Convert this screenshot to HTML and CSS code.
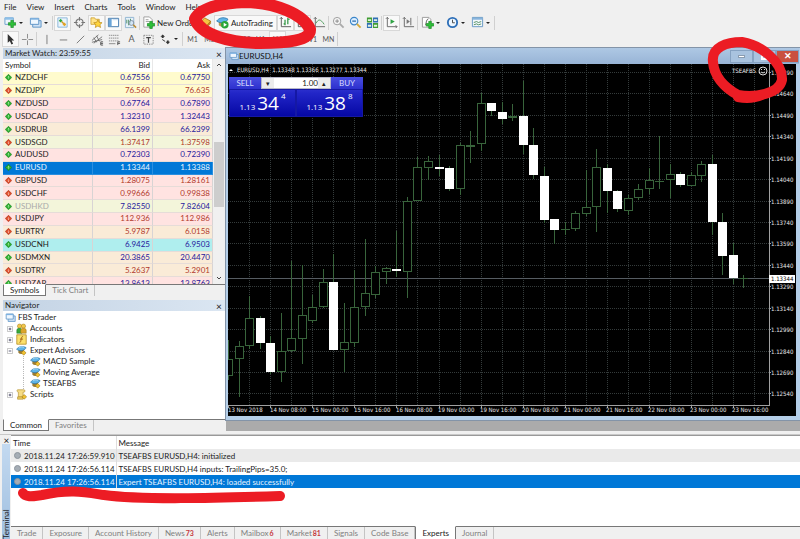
FILE: index.html
```html
<!DOCTYPE html>
<html lang="en">
<head>
<meta charset="utf-8">
<title>FBS Trader - EURUSD,H4</title>
<link rel="stylesheet" href="styles.css">
</head>
<body>
<svg class="defs" aria-hidden="true">
  <symbol id="plus" viewBox="0 0 8 8"><path d="M3 .5h2.4v2.300h2.300v2.400H5.400v2.300H3V5.200H.6V2.800H3z" fill="#2fc03a" stroke="#15801f" stroke-width=".6"/></symbol>
  <symbol id="new" viewBox="0 0 14 14"><path d="M1 2h9v7H1z" fill="#eef6fd" stroke="#6aa0cc"/><path d="M1 1.500h9V4H1z" fill="#8dbfe8"/><use href="#plus" x="4" y="4" width="9" height="9"/></symbol>
  <symbol id="windows" viewBox="0 0 14 14"><path d="M4 5h9v7H4z" fill="#cfe2f5" stroke="#5b92c5"/><path d="M1.500 2.500h9v6.500h-9z" fill="#eff7ff" stroke="#5b92c5"/><path d="M1.500 2.500h9v1.500h-9z" fill="#7db2e2"/></symbol>
  <symbol id="watch" viewBox="0 0 14 14"><path d="M2 2h10v10H2z" fill="#e9f4fc" stroke="#88b5d8"/><path d="M3 5l2-2 2 2-2 2z" fill="#2da83c"/><path d="M6 6l4 4" stroke="#d29a20" stroke-width="1.500"/><path d="M7 9l2-2 2 2-2 2z" fill="#e0a326"/></symbol>
  <symbol id="target" viewBox="0 0 14 14"><circle cx="7" cy="7" r="3.800" fill="none" stroke="#777" stroke-width="1.200"/><path d="M7 1v4M7 9v4M1 7h4M9 7h4" stroke="#777" stroke-width="1.200"/></symbol>
  <symbol id="folder" viewBox="0 0 14 14"><path d="M1 2h4l1 1.500h4V9H1z" fill="#ffe48a" stroke="#c99a25" stroke-width=".8"/><path d="M8.500 4l1.400 2.900 3.100.3-2.300 2.100.7 3.100-2.900-1.600-2.800 1.600.6-3.100L4 7.200l3.100-.3z" fill="#ffd53d" stroke="#b98613" stroke-width=".7"/></symbol>
  <symbol id="terminal" viewBox="0 0 14 14"><path d="M1.500 2.500h11v9h-11z" fill="#fff" stroke="#3f77ac"/><path d="M2 3h3v8H2z" fill="#6aa5d8"/><path d="M6 4h6" stroke="#c2daf0"/></symbol>
  <symbol id="tester" viewBox="0 0 14 14"><path d="M1.500 1.500h9v11h-9z" fill="#e6f1fa" stroke="#8fb3d1"/><path d="M3 8V4m2 6V4m2 4V3" stroke="#4c8f61"/><circle cx="8" cy="7.500" r="2.600" fill="#cfe4f5" fill-opacity=".8" stroke="#7d8da0"/><path d="M10 9.500l3 3" stroke="#b88a32" stroke-width="1.600"/></symbol>
  <symbol id="order" viewBox="0 0 14 14"><path d="M2 1h6l3 3v8H2z" fill="#fff" stroke="#888" stroke-width=".8"/><path d="M4 4h3M4 6h4" stroke="#999"/><use href="#plus" x="5" y="5" width="9" height="9"/></symbol>
  <symbol id="book" viewBox="0 0 14 14"><path d="M1.500 7L6 2l6.500 3.500L8 11z" fill="#f5c542" stroke="#a8700f" stroke-width=".8"/><path d="M1.500 7v2L8 13v-2zM8 11v2l4.500-5V5.500z" fill="#c98a1b" stroke="#a8700f" stroke-width=".6"/></symbol>
  <symbol id="expert" viewBox="0 0 14 14"><path d="M3 6v4c2 2 5 2 7 0V6z" fill="#9a7b35"/><path d="M.7 5.500C3 2 8 .5 12.800 3.300 12 6.500 6 9 .7 5.500z" fill="#5fb4e8" stroke="#1f6fa8" stroke-width=".8"/><path d="M4 3.500c2-1.500 5-1.500 6-.4" stroke="#c5e8fb" fill="none"/><path d="M9.800 7l3 3-3 3-3-3z" fill="#f2c230" stroke="#94700f" stroke-width=".7"/></symbol>
  <symbol id="auto" viewBox="0 0 14 14"><path d="M3 6v4c2 2 5 2 7 0V6z" fill="#b59a50"/><path d="M.7 5.500C3 2 8 .5 12.800 3.300 12 6.500 6 9 .7 5.500z" fill="#5fb4e8" stroke="#1f6fa8" stroke-width=".8"/><circle cx="9.500" cy="9.500" r="4" fill="#29a637"/><path d="M8.300 7.300l3.500 2.200-3.500 2.200z" fill="#fff"/></symbol>
  <symbol id="bars" viewBox="0 0 14 14"><path d="M2.500 1.500v10H13M1 3l1.500-1.500L4 3M2.500 11.500" fill="none" stroke="#555"/><path d="M6.500 4v6M5 8.500h1.500M9.500 2v7M9.500 3.500h2" stroke="#2d9440" stroke-width="1.300"/></symbol>
  <symbol id="candle" viewBox="0 0 14 14"><path d="M2.500 1.500v10H13" fill="none" stroke="#555"/><path d="M6 3h2v6H6zM10 2h2v5h-2z" fill="#2d9440"/></symbol>
  <symbol id="line" viewBox="0 0 14 14"><path d="M2.500 1.500v10H13M1 3l1.500-1.500L4 3" fill="none" stroke="#666"/><path d="M3 8c3-5 5-5 9 1" fill="none" stroke="#4a9a58"/></symbol>
  <symbol id="zoomin" viewBox="0 0 14 14"><circle cx="5.500" cy="5.500" r="4" fill="#f5f5f5" stroke="#999"/><path d="M3.500 5.500h4M5.500 3.500v4" stroke="#888"/><path d="M8.500 8.500l4 4" stroke="#aaa" stroke-width="2"/></symbol>
  <symbol id="zoomout" viewBox="0 0 14 14"><circle cx="5.500" cy="5.500" r="4" fill="#dceeff" stroke="#3a85c9" stroke-width="1.200"/><path d="M3.500 5.500h4" stroke="#2466a5" stroke-width="1.300"/><path d="M8.500 8.500l4 4" stroke="#d4aa3c" stroke-width="2"/></symbol>
  <symbol id="tiles" viewBox="0 0 14 14"><path d="M1 1.500h5.500V7H1zM7.500 7.500H13V13H7.500z" fill="#3f9c33"/><path d="M7.500 1.500H13V7H7.500zM1 7.500h5.500V13H1z" fill="#2e6fb5"/><path d="M2 3.500h3.500v2H2zM8.500 3.500H12v2H8.500zM2 9.500h3.500v2H2zM8.500 9.500H12v2H8.500z" fill="#e2f2e0"/></symbol>
  <symbol id="scroll" viewBox="0 0 14 14"><path d="M2.500 1.500v10H13M1 3l1.500-1.500L4 3M11.500 10L13 11.500 11.500 13" fill="none" stroke="#666"/><path d="M6 3.500L10.500 6 6 8.500z" fill="#2fa344"/></symbol>
  <symbol id="shift" viewBox="0 0 14 14"><path d="M2.500 1.500v10H13M1 3l1.500-1.500L4 3M9.500 2v8" fill="none" stroke="#666"/><path d="M5 3.500L8.500 6 5 8.500z" fill="#777"/></symbol>
  <symbol id="indic" viewBox="0 0 14 14"><path d="M1.500 1.500h7l2 2V12h-9z" fill="#fff" stroke="#999"/><path d="M5 10c1-5 1-6 3-7" stroke="#444" fill="none"/><use href="#plus" x="5" y="5" width="9" height="9"/></symbol>
  <symbol id="clock" viewBox="0 0 14 14"><circle cx="7" cy="7" r="5" fill="#eef7ff" stroke="#2e6fb8" stroke-width="2"/><path d="M7 4v3.300h2.500" fill="none" stroke="#444"/></symbol>
  <symbol id="template" viewBox="0 0 14 14"><path d="M1.500 1.500h11v10h-11z" fill="#f3f8fd" stroke="#6596c2"/><path d="M1.500 2h11v2h-11z" fill="#87b4dc"/><path d="M3 7l3-1 2 1 3-1M3 9.500l3-1 2 1 3-1" fill="none" stroke="#4d8d5c"/></symbol>
  <symbol id="cursor" viewBox="0 0 14 14"><path d="M4 1v9.500l2.300-2L8 12.500l1.800-.8L8.200 8H11z" fill="#333"/></symbol>
  <symbol id="cross" viewBox="0 0 14 14"><path d="M7 1v5M7 8v5M1 7h5M8 7h5" stroke="#888"/></symbol>
  <symbol id="vline" viewBox="0 0 14 14"><path d="M7.500 2v10" stroke="#777"/></symbol>
  <symbol id="hline" viewBox="0 0 14 14"><path d="M3 7.500h8" stroke="#777"/></symbol>
  <symbol id="trend" viewBox="0 0 14 14"><path d="M3 11l8-8" stroke="#777"/></symbol>
  <symbol id="channel" viewBox="0 0 14 14"><path d="M1 8l7-6M3 11l9-7M3 5l3 5M6 3l3 6M1 10l11-3" stroke="#666" stroke-width=".9"/><path d="M13 9.500h-2.500v3.500H13M10.500 11.200H13" fill="none" stroke="#333" stroke-width=".8"/></symbol>
  <symbol id="fibo" viewBox="0 0 14 14"><path d="M1 2.500h11M1 5.500h11M1 8.500h11" stroke="#888" stroke-dasharray="1.500 .7"/><path d="M1 11.500h7" stroke="#888"/><path d="M10.500 13v-3.500H13M10.500 11.200H13" fill="none" stroke="#333" stroke-width=".8"/></symbol>
  <symbol id="label" viewBox="0 0 14 14"><path d="M2 2.500h10v9.500H2z" fill="none" stroke="#888" stroke-dasharray="1.500 1"/><path d="M4.500 5h5M7 5v5.500" stroke="#444" stroke-width="1.300"/></symbol>
  <symbol id="shapes" viewBox="0 0 14 14"><path d="M1.500 4l2.500-2.500L6.500 4H5v1.500H3V4zM7 9.500h1.500V8h2v1.500H12L9.500 12z" fill="#333"/><path d="M3.500 7l3 2" stroke="#333"/></symbol>
  <symbol id="up" viewBox="0 0 8 8"><path d="M4 .3L7.700 4 4 7.700.3 4z" fill="#2bb02f" stroke="#12761b" stroke-width=".6"/><path d="M4 2.500v3M3 3.800l1-1 1 1" stroke="#c8f5c4" stroke-width=".6" fill="none"/></symbol>
  <symbol id="down" viewBox="0 0 8 8"><path d="M4 .3L7.700 4 4 7.700.3 4z" fill="#dd4a28" stroke="#a02a12" stroke-width=".6"/><path d="M4 2.500v3M3 4.200l1 1 1-1" stroke="#ffd5c8" stroke-width=".6" fill="none"/></symbol>
  <symbol id="accounts" viewBox="0 0 14 14"><circle cx="4.500" cy="4" r="2.700" fill="#f2c84b" stroke="#9c7410" stroke-width=".6"/><path d="M1 13V9c0-3 6.500-3 6.500 0v4z" fill="#38a838" stroke="#1c6f22" stroke-width=".6"/><circle cx="9.500" cy="4" r="2.700" fill="#f2c84b" stroke="#9c7410" stroke-width=".6"/><path d="M6 13V9c0-3 7-3 7 0v4z" fill="#dba52c" stroke="#9c7410" stroke-width=".6"/></symbol>
  <symbol id="fx" viewBox="0 0 14 14"><path d="M1 1h12v12H1z" fill="#fbe06c" stroke="#b58e1e"/><path d="M9 3.500C7 2.500 7 5 6.500 7S6 11 4.500 10.500M5 6.500h4" fill="none" stroke="#9c5a10" stroke-width="1.100"/></symbol>
  <symbol id="scripts" viewBox="0 0 14 14"><path d="M2 1h8c2 0 2 3 0 3H9v6H3V4C1 4 1 1 2 1z" fill="#f6dc84" stroke="#b28e2b" stroke-width=".8"/><path d="M2 10h7v3H2z" fill="#eccd63" stroke="#b28e2b" stroke-width=".8"/><path d="M10.500 7l3 3-3 3-3-3z" fill="#f2c230" stroke="#94700f" stroke-width=".7"/></symbol>
  <symbol id="expand" viewBox="0 0 7 7"><path d="M.5.5h6v6h-6z" fill="#fff" stroke="#bbb"/><path d="M2 3.500h3M3.500 2v3" stroke="#446"/></symbol>
  <symbol id="collapse" viewBox="0 0 7 7"><path d="M.5.5h6v6h-6z" fill="#fff" stroke="#bbb"/><path d="M2 3.500h3" stroke="#446"/></symbol>
</svg>

<nav class="menu" aria-label="Main menu">
  <a href="#">File</a><a href="#">View</a><a href="#">Insert</a><a href="#">Charts</a><a href="#">Tools</a><a href="#">Window</a><a href="#">Help</a>
</nav>

<div class="toolbar">
  <button class="drop" aria-label="New chart"><svg><use href="#new"/></svg></button>
  <button class="drop" aria-label="Profiles"><svg><use href="#windows"/></svg></button>
  <i class="sep"></i>
  <button class="on" aria-label="Market Watch"><svg><use href="#watch"/></svg></button>
  <button aria-label="Data window"><svg><use href="#target"/></svg></button>
  <button class="on" aria-label="Navigator"><svg><use href="#folder"/></svg></button>
  <button class="on" aria-label="Terminal"><svg><use href="#terminal"/></svg></button>
  <button aria-label="Strategy tester"><svg><use href="#tester"/></svg></button>
  <i class="sep"></i>
  <button class="wide"><svg><use href="#order"/></svg>New Order</button>
  <button aria-label="MetaEditor"><svg><use href="#book"/></svg></button>
  <button class="wide on"><svg><use href="#auto"/></svg>AutoTrading</button>
  <button class="on" aria-label="Bar chart"><svg><use href="#bars"/></svg></button>
  <button class="on" aria-label="Candlesticks"><svg><use href="#candle"/></svg></button>
  <button aria-label="Line chart"><svg><use href="#line"/></svg></button>
  <i class="sep"></i>
  <button aria-label="Zoom in"><svg><use href="#zoomin"/></svg></button>
  <button aria-label="Zoom out"><svg><use href="#zoomout"/></svg></button>
  <button aria-label="Tile windows"><svg><use href="#tiles"/></svg></button>
  <i class="sep"></i>
  <button class="on" aria-label="Auto scroll"><svg><use href="#scroll"/></svg></button>
  <button aria-label="Chart shift"><svg><use href="#shift"/></svg></button>
  <i class="sep"></i>
  <button class="drop" aria-label="Indicators"><svg><use href="#indic"/></svg></button>
  <button class="drop" aria-label="Periods"><svg><use href="#clock"/></svg></button>
  <button class="drop" aria-label="Templates"><svg><use href="#template"/></svg></button>
  <i class="sep"></i>
</div>

<div class="toolbar tools">
  <button class="on" aria-label="Cursor"><svg><use href="#cursor"/></svg></button>
  <button aria-label="Crosshair"><svg><use href="#cross"/></svg></button>
  <i class="sep"></i>
  <button aria-label="Vertical line"><svg><use href="#vline"/></svg></button>
  <button aria-label="Horizontal line"><svg><use href="#hline"/></svg></button>
  <button aria-label="Trendline"><svg><use href="#trend"/></svg></button>
  <button aria-label="Channel"><svg><use href="#channel"/></svg></button>
  <button aria-label="Fibonacci"><svg><use href="#fibo"/></svg></button>
  <button class="letter">A</button>
  <button aria-label="Text label"><svg><use href="#label"/></svg></button>
  <button class="drop" aria-label="Arrows"><svg><use href="#shapes"/></svg></button>
  <i class="sep"></i>
  <button>M1</button><button>M5</button><button>M15</button><button>M30</button><button>H1</button><button class="on">H4</button><button>D1</button><button>W1</button><button>MN</button>
  <i class="sep"></i>
</div>

<main class="work">
  <div class="side">
    <section class="panel">
      <h2>Market Watch: 23:59:55<button aria-label="Close Market Watch">×</button></h2>
      <div class="quotes">
        <table>
          <thead><tr><th>Symbol</th><th>Bid</th><th>Ask</th></tr></thead>
          <tbody id="quotes"></tbody>
        </table>
        <div class="scroll"><svg viewBox="0 0 6 4"><path d="M1 3l2-2 2 2"/></svg><i></i><svg viewBox="0 0 6 4"><path d="M1 1l2 2 2-2"/></svg></div>
      </div>
      <div class="tabs"><button class="active">Symbols</button><button>Tick Chart</button></div>
    </section>
    <section class="panel nav">
      <h2>Navigator<button aria-label="Close Navigator">×</button></h2>
      <ul class="tree">
        <li class="root"><svg><use href="#windows"/></svg>FBS Trader</li>
        <li><svg class="box"><use href="#expand"/></svg><svg><use href="#accounts"/></svg>Accounts</li>
        <li><svg class="box"><use href="#expand"/></svg><svg><use href="#fx"/></svg>Indicators</li>
        <li><svg class="box"><use href="#collapse"/></svg><svg><use href="#expert"/></svg>Expert Advisors</li>
        <li class="leaf"><svg><use href="#expert"/></svg>MACD Sample</li>
        <li class="leaf"><svg><use href="#expert"/></svg>Moving Average</li>
        <li class="leaf"><svg><use href="#expert"/></svg>TSEAFBS</li>
        <li><svg class="box"><use href="#expand"/></svg><svg><use href="#scripts"/></svg>Scripts</li>
      </ul>
      <div class="tabs"><button class="active">Common</button><button>Favorites</button></div>
    </section>
  </div>

  <div class="desk">
    <section class="chart-window">
      <header>
        <svg><use href="#windows"/></svg><span>EURUSD,H4</span>
        <button aria-label="Minimize"><i class="min"></i></button><button aria-label="Maximize"><i class="max"></i></button><button class="close" aria-label="Close">✕</button>
      </header>
      <div class="chart">
        <svg id="plot" viewBox="228 64 568 352" role="img" aria-label="EURUSD four hour candlestick chart"></svg>
        <form class="trade">
          <button type="button">SELL</button>
          <div class="lots"><button type="button" aria-label="Less">▾</button><input value="1.00" aria-label="Volume"><button type="button" aria-label="More">▴</button></div>
          <button type="button">BUY</button>
          <div class="prices">
            <button type="button" class="price"><small>1.13</small><b>34</b><sup>4</sup></button>
            <button type="button" class="price"><small>1.13</small><b>38</b><sup>8</sup></button>
          </div>
        </form>
      </div>
    </section>
  </div>
</main>

<section class="terminal">
  <div class="strip"><button aria-label="Close Terminal">×</button><span>Terminal</span></div>
  <div class="log">
    <table>
      <thead><tr><th>Time</th><th>Message</th></tr></thead>
      <tbody>
        <tr class="alt"><td>2018.11.24 17:26:59.910</td><td>TSEAFBS EURUSD,H4: initialized</td></tr>
        <tr><td>2018.11.24 17:26:56.114</td><td>TSEAFBS EURUSD,H4 inputs: TrailingPips=35.0;</td></tr>
        <tr class="selected"><td>2018.11.24 17:26:56.114</td><td>Expert TSEAFBS EURUSD,H4: loaded successfully</td></tr>
      </tbody>
    </table>
    <div class="tabs"><button>Trade</button><button>Exposure</button><button>Account History</button><button>News<em>73</em></button><button>Alerts</button><button>Mailbox<em>6</em></button><button>Market<em>81</em></button><button>Signals</button><button>Code Base</button><button class="active">Experts</button><button>Journal</button></div>
  </div>
</section>

<svg class="marker" viewBox="0 0 800 539" aria-hidden="true">
  <path class="thick" d="M195 19C201 7 222 3 246 2C276 3 303 14 310 29C311 41 286 43 260 43C228 43 200 34 195 19Z"/>
  <path d="M713 62C711 47 727 42 742 42C761 45 783 62 782 80C779 94 755 98 738 95C723 87 714 75 713 62ZM738 97C748 99 756 98 764 94"/>
  <path d="M23 493C26 498 34 496 42 495C70 489 84 492 104 495C140 500 215 498 280 496"/>
</svg>
<script src="app.js"></script>
</body>
</html>
```
FILE: styles.css
```css
* { box-sizing: border-box; }
body {
  margin: 0;
  min-height: 100vh;
  display: flex;
  flex-direction: column;
  position: relative;
  overflow: hidden;
  background: #f0f0f0;
  color: #222;
  font: 8px/12px Lato, "Open Sans", sans-serif;
}
button, input { font: inherit; color: inherit; border: 0; padding: 0; margin: 0; background: none; }
a { color: inherit; text-decoration: none; }
table { border-collapse: collapse; }
h2 { margin: 0; font: inherit; }
svg { display: block; flex: none; }
.defs { position: absolute; width: 0; height: 0; }

.menu { display: flex; gap: 10px; padding: 0 4px; height: 14px; line-height: 14px; }

.toolbar { display: flex; align-items: center; height: 17px; padding-left: 2px; }
.toolbar.tools { height: 16px; }
.toolbar button { width: 17px; height: 16px; display: flex; align-items: center; justify-content: center; gap: 2px; white-space: nowrap; }
.toolbar svg { width: 13px; height: 13px; }
.toolbar .on { background: #f9f9f9; border: 1px solid #d8d8d8; }
.toolbar .drop { width: 25px; justify-content: flex-start; gap: 2px; padding-left: 2px; }
.toolbar .drop::after { content: ""; border: 2px solid transparent; border-top-color: #222; border-bottom: 0; }
.toolbar .wide { width: 56px; justify-content: flex-start; padding-left: 1px; }
.toolbar .wide.on { width: 63px; }
.toolbar .sep { width: 1px; height: 14px; background: #d0d0d0; margin-right: 1px; }
.toolbar .letter { font-size: 9px; }
.tools button { font-size: 7px; color: #555; }

.work { flex: 1; display: grid; grid-template-columns: 226px 1fr; padding-bottom: 3px; }
.side { display: flex; flex-direction: column; gap: 4px; padding: 1px 1px 0 3px; }
.panel { display: flex; flex-direction: column; }
.panel.nav { flex: 1; }
.panel h2 { display: flex; justify-content: space-between; height: 11px; line-height: 11px; padding: 0 2px; background: linear-gradient(90deg, #c3d3e4, #dbe6f2); }
.panel h2 button { width: 8px; line-height: 10px; font-size: 10px; }

.quotes { display: flex; height: 225px; overflow: hidden; background: #fff; }
.quotes table { flex: 1; display: block; }
.quotes thead { display: block; }
.quotes tr { display: grid; grid-template-columns: 90px 60px 60px; align-items: stretch; }
.quotes th { font-weight: 400; height: 13px; line-height: 13px; text-align: right; padding: 0 2px; border-right: 1px solid #e8e8e8; }
.quotes th:first-child { text-align: left; }
.quotes tbody { display: grid; height: 218px; grid-auto-rows: 1fr; }
.quotes td { display: flex; align-items: center; justify-content: flex-end; padding: 0 2px; border-right: 1px solid #d8d4d4; border-bottom: 1px solid #e6dcd8; line-height: 11px; }
.quotes td:first-child { justify-content: flex-start; gap: 3px; }
.quotes td svg { width: 7px; height: 7px; }
.quotes .rise { color: #26189c; }
.quotes .fall { color: #b13a2c; }
.quotes .muted { color: #aaa; }
.yellow { background: #fffbcd; }
.pink { background: #ffe3e1; }
.sand { background: #faebd7; }
.lime { background: #f3f5da; }
.aqua { background: #afeeee; }
.quotes .current, .quotes .current td { background: #0078d7; color: #e8f4ff; border-color: #2a8fe0; }
.scroll { width: 12px; background: #f0f0f0; display: grid; grid-template-rows: 83px 65px 1fr; justify-items: center; }
.scroll i { width: 10px; background: #cdcdcd; }
.scroll svg { width: 6px; height: 4px; margin-top: 4px; fill: none; stroke: #444; }
.scroll svg:last-child { align-self: end; margin-bottom: 4px; }

.tabs { display: flex; height: 12px; border-top: 1px solid #777; color: #808080; }
.tabs button { padding: 0 6px; line-height: 11px; border-right: 1px solid #c4c4c4; white-space: nowrap; }
.tabs .active { margin-top: -1px; background: #fff; color: #222; border: 1px solid #777; border-top-color: #fff; }

.tree { flex: 1; list-style: none; margin: 0; padding: 1px 0 0; background: #fff; line-height: 11px; }
.tree li { display: flex; align-items: center; gap: 3px; height: 11px; padding-left: 4px; }
.tree li.root { padding-left: 2px; gap: 2px; }
.tree li.leaf { margin-left: 20px; padding-left: 6px; gap: 2px; border-left: 1px dotted #bbb; }
.tree svg { width: 11px; height: 11px; }
.tree .box { width: 6px; height: 6px; }

.desk { background: #ababab; padding-top: 1px; min-width: 0; }
.chart-window { border: 0 solid #b4cee8; border-width: 0 4px 4px 2px; background: #000; outline: 1px solid #8394a8; }
.chart-window header { display: flex; align-items: center; height: 16px; margin: 0 -3px 0 -2px; padding-left: 3px; background: linear-gradient(#aec8e4, #98b4d6); color: #111; }
.chart-window header svg { width: 10px; height: 10px; }
.chart-window header span { flex: 1; }
.chart-window header button { width: 23px; height: 13px; display: flex; align-items: center; justify-content: center; border: 1px solid #86a2c2; background: #a9c3df; }
.chart-window header .close { background: #c9503f; color: #fff; font-size: 9px; font-weight: 700; }
.min { width: 7px; height: 3px; background: #fff; border: 1px solid #8a9cb0; }
.max { width: 8px; height: 7px; border: 2px solid #fff; }
.chart { position: relative; }
#plot { width: 100%; height: auto; }
#plot .grid { stroke: #343b3b; stroke-dasharray: 1 1; }
#plot .axis { stroke: #a0a0a0; }
#plot .bid { stroke: #565c62; }
#plot .bull { fill: #000; stroke: #38643b; }
#plot .bear { fill: #fff; stroke: #fff; }
#plot .wick { stroke: #38643b; }
#plot .tag { fill: #fff; }
#plot text { fill: #e8e8e8; font: 6px "DejaVu Sans Condensed", "DejaVu Sans", sans-serif; }
#plot .tag-text { fill: #000; }
#plot .face { fill: none; stroke: #ddd; }

.trade { position: absolute; left: 1px; top: 13px; display: grid; grid-template-columns: 32px 70px 32px; grid-template-rows: 12px 28px; background: linear-gradient(#4a4fe0, #2226c8 40%, #0406a2); color: #d8dcff; }
.trade .lots { display: flex; height: 12px; background: #fff; color: #222; border: 1px solid #b8b8c8; }
.trade .lots button { width: 12px; background: #ececec; font-size: 7px; line-height: 9px; }
.trade input { flex: 1; width: 10px; text-align: right; }
.trade .prices { grid-column: 1 / 4; display: flex; }
.trade .price { flex: 1; display: flex; align-items: baseline; justify-content: center; gap: 2px; color: #fff; border: 1px solid #1518a4; font-family: "Open Sans", sans-serif; }
.trade .price small { font-size: 8px; }
.trade .price b { font-size: 19px; line-height: 26px; font-weight: 400; }
.trade .price sup { font-size: 8px; align-self: flex-start; line-height: 12px; }

.terminal { height: 105px; display: grid; grid-template-columns: 11px 1fr; border-top: 1px solid #c8c8c8; }
.strip { display: flex; flex-direction: column; padding-left: 2px; }
.strip button { height: 9px; line-height: 8px; font-size: 10px; }
.strip span { flex: 1; width: 8px; background: linear-gradient(#9fbfdf, #c3d9f0); writing-mode: vertical-rl; transform: rotate(180deg); line-height: 8px; }
.log { display: flex; flex-direction: column; background: #fff; border-top: 1px solid #999; }
.log table { width: 100%; table-layout: fixed; }
.log th, .log td { height: 13px; padding: 0 0 0 2px; line-height: 12px; text-align: left; font-weight: 400; white-space: nowrap; }
.log th:first-child, .log td:first-child { width: 105px; border-right: 1px solid #ddd; }
.log td:first-child::before { content: ""; display: inline-block; width: 5px; height: 5px; margin: 0 3px 0 1px; border-radius: 50%; background: #a5adb5; border: 1px solid #8c949c; }
.log .alt { background: #eaeaea; }
.log .selected { background: #0078d7; color: #e8f4ff; }
.log .tabs { margin-top: auto; background: #f0f0f0; height: 13px; }
.log .tabs button { line-height: 12px; }
.log .tabs .active { border-bottom: 0; }
.tabs em { font-style: normal; font-size: 7px; font-weight: 700; color: #c4373c; padding-left: 1px; }

.marker { position: absolute; left: 0; top: 0; width: 800px; height: 539px; pointer-events: none; fill: none; stroke: #ec1c24; stroke-width: 10; stroke-linecap: round; stroke-linejoin: round; }
.marker .thick { stroke-width: 12; }
```
FILE: app.js
```js
// Market Watch rows: symbol, bid, ask, direction, row colour
const quotes = [
  ["NZDCHF", "0.67556", "0.67750", "up", "yellow"],
  ["NZDJPY", "76.560", "76.635", "down", "yellow"],
  ["NZDUSD", "0.67764", "0.67890", "up", "pink"],
  ["USDCAD", "1.32310", "1.32443", "up", "pink"],
  ["USDRUB", "66.1399", "66.2399", "up", "sand"],
  ["USDSGD", "1.37417", "1.37598", "down", "lime"],
  ["AUDUSD", "0.72303", "0.72390", "up", "pink"],
  ["EURUSD", "1.13344", "1.13388", "up", "current"],
  ["GBPUSD", "1.28075", "1.28161", "down", "pink"],
  ["USDCHF", "0.99666", "0.99838", "down", "pink"],
  ["USDHKD", "7.82550", "7.82604", "up", "lime"],
  ["USDJPY", "112.936", "112.986", "down", "pink"],
  ["EURTRY", "5.9787", "6.0158", "down", "sand"],
  ["USDCNH", "6.9425", "6.9503", "up", "aqua"],
  ["USDMXN", "20.3865", "20.4470", "up", "sand"],
  ["USDTRY", "5.2637", "5.2901", "down", "sand"],
  ["USDZAR", "13.8613", "13.8763", "up", "pink"]
];
document.getElementById("quotes").innerHTML = quotes.map(([s, bid, ask, dir, tone]) => {
  const c = dir === "up" ? "rise" : "fall";
  return `<tr class="${tone}"><td class="${s === "USDHKD" ? "muted" : ""}"><svg><use href="#${dir}"/></svg>${s}</td><td class="${c}">${bid}</td><td class="${c}">${ask}</td></tr>`;
}).join("");

// Candles: high, body top, body bottom, low, falling
const candles = [
  [340,359,376,380],[341,346,359,397],[296,318,346,349],[316,318,343,349,1],[336,343,372,374,1],
  [313,351,372,382],[261,338,351,352],[265,315,339,364],[295,307,321,323],[269,282,307,308],
  [254,282,350,350,1],[303,342,350,372],[270,307,343,347],[239,293,307,316],[266,272,295,298],
  [267,268,272,284],[231,269,271,277,1],[197,201,272,298],[157,167,201,201],[156,161,168,180],
  [155,167,169,176,1],[166,168,189,191,1],[143,145,189,195],[131,145,146,163],[93,103,144,151],
  [103,103,111,116,1],[102,112,119,124,1],[104,116,118,121],[81,116,145,154,1],[128,145,175,179,1],
  [167,176,220,223,1],[219,219,230,244,1],[222,229,229,235],[211,213,229,231],[170,207,214,216],
  [149,167,207,232],[164,168,191,213,1],[190,191,209,212,1],[195,198,211,215],[184,189,198,200],
  [168,180,189,194],[136,181,181,189],[164,174,180,198],[172,174,185,187,1],[172,175,186,186],
  [161,164,176,182],[155,164,222,235,1],[213,222,256,275,1],[243,255,278,284,1],[275,278,278,288]
];
const out = [];
const line = (x1, y1, x2, y2, cls) => out.push(`<line x1="${x1}" y1="${y1}" x2="${x2}" y2="${y2}" class="${cls}"/>`);
const text = (x, y, s, cls = "") => out.push(`<text x="${x}" y="${y}" class="${cls}">${s}</text>`);
const colX = k => Math.round(228.3 + 21.02 * k) + 0.5;
const rowY = k => Math.round(72 + 21.43 * k) + 0.5;

for (let k = 1; k < 26; k++) line(colX(k), 64, colX(k), 405, "grid");
for (let k = 0; k < 16; k++) {
  line(228, rowY(k), 769, rowY(k), "grid");
  line(769, rowY(k), 771, rowY(k), "axis");
  text(771, rowY(k) + 2, (1.1479 - 0.0015 * k).toFixed(5));
}
line(228, 278.5, 769, 278.5, "bid");
candles.forEach(([hi, top, bottom, lo, falling], i) => {
  const x = Math.round(228.3 + 10.51 * i);
  line(x + 0.5, hi, x + 0.5, lo, "wick");
  if (bottom - top < 1) line(x - 4, top + 0.5, x + 5, top + 0.5, "wick");
  else out.push(`<rect x="${x - 3.5}" y="${top + 0.5}" width="8" height="${Math.max(bottom - top - 1, 1)}" class="${falling ? "bear" : "bull"}"/>`);
});
line(769.5, 64, 769.5, 405, "axis");
line(228, 405.5, 770, 405.5, "axis");
["13 Nov 2018","14 Nov 08:00","15 Nov 00:00","15 Nov 16:00","16 Nov 08:00","19 Nov 00:00","19 Nov 16:00","20 Nov 08:00","21 Nov 00:00","21 Nov 16:00","22 Nov 08:00","23 Nov 00:00","23 Nov 16:00"]
  .forEach((s, i) => { line(colX(2 * i), 405, colX(2 * i), 408, "axis"); text(228 + 42 * i, 412, s); });
out.push('<rect x="769" y="275" width="26" height="8" class="tag"/>');
text(771, 281, "1.13344", "tag-text");
out.push('<path d="M229 71l2-2 2 2z" class="tag"/>');
text(237, 72, "EURUSD,H4&#160; 1.13348 1.13366 1.13277 1.13344");
text(732, 73, "TSEAFBS");
out.push('<circle cx="763" cy="71" r="4" class="face"/><path d="M761 72q2 2 4 0M761.500 69v1M764.500 69v1" class="face"/>');
document.getElementById("plot").innerHTML = out.join("");
```
